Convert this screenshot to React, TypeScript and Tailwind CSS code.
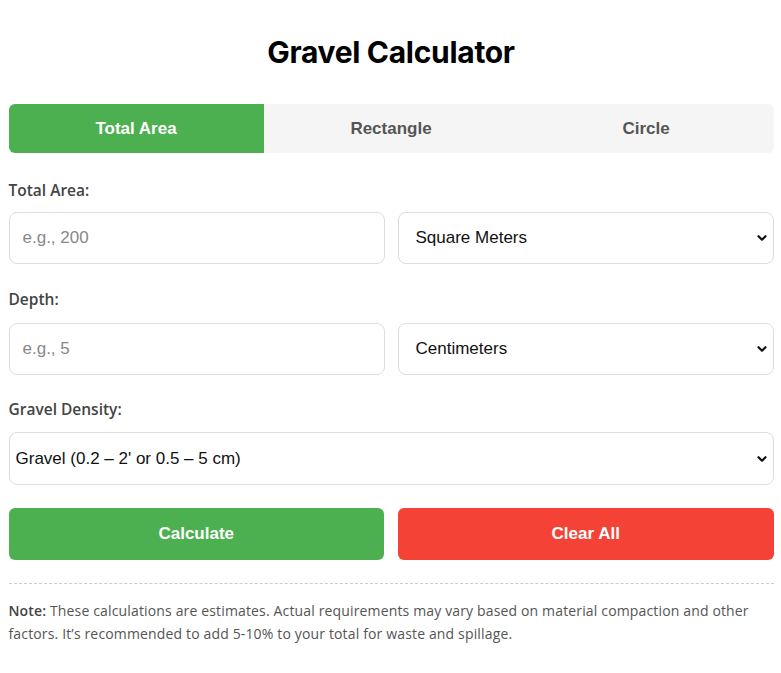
import React, { useState } from "react";

const tabs = ["Total Area", "Rectangle", "Circle"];

function Chevron() {
  return (
    <svg
      className="pointer-events-none absolute right-[6px] top-1/2 -translate-y-1/2"
      width="12"
      height="12"
      viewBox="0 0 12 12"
      aria-hidden="true"
    >
      <path d="M2.5 4.2 6 7.7 9.5 4.2" fill="none" stroke="#111" strokeWidth="2.2" strokeLinecap="round" strokeLinejoin="round" />
    </svg>
  );
}

function Select({ options, pad = "pl-[17px]" }: { options: string[]; pad?: string }) {
  return (
    <div className="relative min-w-0">
      <select
        className={
          "h-full w-full appearance-none rounded-lg border border-[#ddd] bg-white pr-8 font-['Liberation_Sans',Arial,sans-serif] text-[17px] text-[#111] outline-none " +
          pad
        }
      >
        {options.map((o) => (
          <option key={o}>{o}</option>
        ))}
      </select>
      <Chevron />
    </div>
  );
}

function Label({ children }: { children: React.ReactNode }) {
  return (
    <label className="block font-['Open_Sans',sans-serif] text-[15.5px] font-semibold leading-[21px] text-[#444]">
      {children}
    </label>
  );
}

export default function App() {
  const [tab, setTab] = useState(0);

  return (
    <div className="min-h-[673px] bg-white">
      <div className="mx-auto w-[766px] pt-[34px] pl-[1px]">
        <h1 className="text-center font-['Inter',sans-serif] text-[30px] font-bold leading-[36px] tracking-[-0.3px] text-black">
          Gravel Calculator
        </h1>

        <div className="mt-[34px] flex h-[49px] overflow-hidden rounded-md bg-[#f5f5f5]">
          {tabs.map((t, i) => (
            <button
              key={t}
              onClick={() => setTab(i)}
              className={
                "flex-1 font-['Liberation_Sans',Arial,sans-serif] text-[17px] font-bold " +
                (tab === i ? "bg-[#4caf50] text-white" : "text-[#555]")
              }
            >
              {t}
            </button>
          ))}
        </div>

        <div className="mt-[27px]">
          <Label>Total Area:</Label>
          <div className="mt-[11px] grid h-[52px] grid-cols-2 gap-[13px]">
            <input
              placeholder="e.g., 200"
              className="min-w-0 rounded-lg border border-[#ddd] px-[13px] font-['Liberation_Sans',Arial,sans-serif] text-[17px] text-[#111] outline-none placeholder:text-[#888]"
            />
            <Select options={["Square Meters", "Square Feet", "Square Yards"]} />
          </div>
        </div>

        <div className="mt-[25px]">
          <Label>Depth:</Label>
          <div className="mt-[13px] grid h-[52px] grid-cols-2 gap-[13px]">
            <input
              placeholder="e.g., 5"
              className="min-w-0 rounded-lg border border-[#ddd] px-[13px] font-['Liberation_Sans',Arial,sans-serif] text-[17px] text-[#111] outline-none placeholder:text-[#888]"
            />
            <Select options={["Centimeters", "Meters", "Inches", "Feet"]} />
          </div>
        </div>

        <div className="mt-[24px]">
          <Label>Gravel Density:</Label>
          <div className="mt-[12px] grid h-[53px]">
            <Select pad="pl-[6px]" options={["Gravel (0.2 – 2' or 0.5 – 5 cm)"]} />
          </div>
        </div>

        <div className="mt-[23px] grid h-[52px] grid-cols-2 gap-[14px]">
          <button className="rounded-md bg-[#4caf50] font-['Liberation_Sans',Arial,sans-serif] text-[17px] font-bold text-white">
            Calculate
          </button>
          <button className="rounded-md bg-[#f44336] font-['Liberation_Sans',Arial,sans-serif] text-[17px] font-bold text-white">
            Clear All
          </button>
        </div>

        <div className="mt-[23px] border-t border-dashed border-[#ccc] pt-[15px]">
          <p className="font-['Open_Sans',sans-serif] text-[14px] leading-[23px] tracking-[0.15px] text-[#555]">
            <strong className="font-semibold text-[#444]">Note:</strong> These calculations are estimates. Actual
            requirements may vary based on material compaction and other factors. It’s recommended to add 5-10% to
            your total for waste and spillage.
          </p>
        </div>
      </div>
    </div>
  );
}
